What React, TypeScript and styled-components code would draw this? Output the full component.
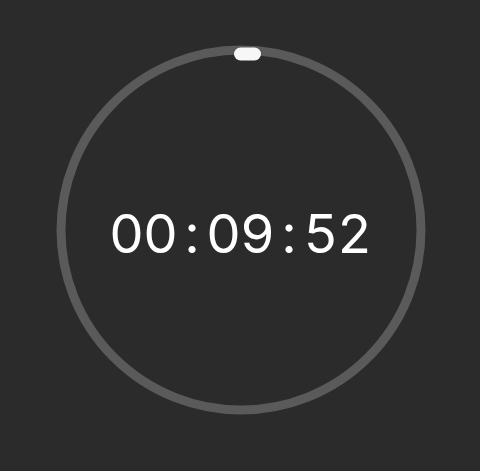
import React from 'react';
import styled, { createGlobalStyle } from 'styled-components';

const GlobalStyle = createGlobalStyle`
  html,
  body {
    margin: 0;
    padding: 0;
    background-color: #2b2b2b;
  }
`;

const Page = styled.div`
  width: 480px;
  height: 471px;
  box-sizing: border-box;
  padding-top: 44px;
  display: flex;
  justify-content: center;
  align-items: flex-start;
  background-color: #2b2b2b;
  font-family: Inter, 'Liberation Sans', sans-serif;
`;

const Dial = styled.div`
  display: grid;
  width: 372px;
  height: 372px;
  margin-left: 1px;

  > * {
    grid-area: 1 / 1;
  }
`;

const Ring = styled.svg`
  display: block;
  width: 372px;
  height: 372px;
`;

const Readout = styled.div`
  align-self: center;
  justify-self: center;
  display: flex;
  padding-top: 7px;
  color: #ffffff;
  font-size: 54px;
  line-height: 54px;
  font-weight: 400;
`;

const Char = styled.span<{ $colon?: boolean }>`
  display: block;
  width: ${(props) => (props.$colon ? '29px' : '34px')};
  text-align: center;
`;

const time = '00:09:52';

const App = () => {
  return (
    <>
      <GlobalStyle />
      <Page>
        <Dial>
          <Ring viewBox='0 0 372 372'>
            <circle
              cx='186'
              cy='186'
              r='180'
              fill='none'
              stroke='#5a5a5a'
              strokeWidth='9'
            />
            <rect x='179' y='3.5' width='27' height='13' rx='6.5' fill='#f7f7f7' />
          </Ring>
          <Readout>
            {time.split('').map((c, i) => (
              <Char key={i} $colon={c === ':'}>
                {c}
              </Char>
            ))}
          </Readout>
        </Dial>
      </Page>
    </>
  );
};

export default App;
